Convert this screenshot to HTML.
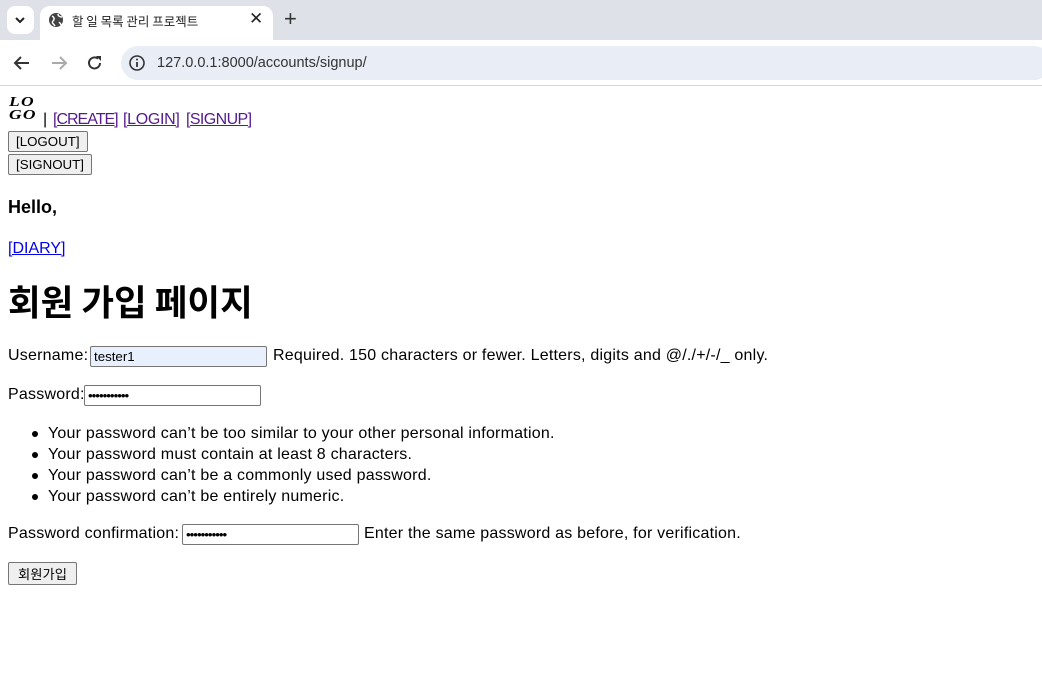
<!DOCTYPE html>
<html><head><meta charset="utf-8">
<style>
*{box-sizing:border-box}
html,body{margin:0;padding:0;width:1042px;height:683px;overflow:hidden;background:#fff;
font-family:"Liberation Sans","Noto Sans CJK KR",sans-serif;font-size:16px;color:#000}
.a{position:absolute;white-space:nowrap}
.t{letter-spacing:.22px}
.tabbar{position:absolute;left:0;top:0;width:1042px;height:40px;background:#dee1e8}
.tab{position:absolute;left:40px;top:6px;width:233px;height:34px;background:#fff;border-radius:10px 10px 0 0}
.tbar{position:absolute;left:0;top:40px;width:1042px;height:46px;background:#fff;border-bottom:1px solid #d6d6d6}
.addr{position:absolute;left:121px;top:46px;width:930px;height:34px;background:#e9edf6;border-radius:17px}
a{color:#551a8b}
.blue{color:#0000ee}
.btn{position:absolute;background:#efefef;border:1px solid #767676;border-radius:2px;font-size:13.3px;font-family:"Liberation Sans",sans-serif;padding:0 7px;height:21px;line-height:19px}
.inp{position:absolute;height:21px;border:1px solid #767676;border-radius:2px;background:#fff;font-size:13.3px;line-height:19px;padding-left:3px;font-family:"Liberation Sans",sans-serif}
ul{margin:0;padding:0;list-style:none}
li{position:absolute;left:48px;white-space:nowrap;list-style:none;letter-spacing:.22px}
li::before{content:"";position:absolute;left:-16px;top:6px;width:6px;height:6px;border-radius:50%;background:#000}
</style></head><body>
<div class="tabbar"></div>
<div style="position:absolute;left:7px;top:6px;width:27px;height:28px;background:#fff;border-radius:8px"></div>
<svg class="a" style="left:14px;top:15px" width="12" height="10"><path d="M2 3l4 4 4-4" stroke="#222" stroke-width="2" fill="none"/></svg>
<div class="tab"></div>
<svg class="a" style="left:48px;top:12px" width="16" height="16"><circle cx="8" cy="8" r="7" fill="#444"/><path d="M4 4c2 1 3 3 1 5s1 3 2 5M10 2c0 2 2 3 4 3M11 10c1 1 2 2 2 3" stroke="#fff" stroke-width="1.5" fill="none"/></svg>
<div class="a" style="left:72px;top:11px;font-size:12.5px;color:#222;font-family:'Noto Sans CJK KR',sans-serif">할 일 목록 관리 프로젝트</div>
<div class="a" style="left:249px;top:9px;font-size:17px;color:#222">✕</div>
<div class="a" style="left:284px;top:6px;font-size:22px;color:#333">+</div>
<div class="tbar"></div>
<div class="addr"></div>
<svg class="a" style="left:13px;top:55px" width="18" height="16"><path d="M16 8H3M8 2L2 8l6 6" stroke="#333" stroke-width="2" fill="none"/></svg>
<svg class="a" style="left:50px;top:55px" width="18" height="16"><path d="M2 8h13M10 2l6 6-6 6" stroke="#aaa" stroke-width="2" fill="none"/></svg>
<svg class="a" style="left:86px;top:54px" width="18" height="18"><path d="M14 9a5.5 5.5 0 1 1-2-4.3" stroke="#333" stroke-width="2" fill="none"/><path d="M10 2h5v5z" fill="#333"/></svg>
<svg class="a" style="left:129px;top:55px" width="16" height="16"><circle cx="8" cy="8" r="7" stroke="#333" stroke-width="1.6" fill="none"/><path d="M8 7v5" stroke="#333" stroke-width="1.8"/><circle cx="8" cy="4.5" r="1" fill="#333"/></svg>
<div class="a" style="left:157px;top:55px;font-size:14.5px;color:#333">127.0.0.1:8000/accounts/signup/</div>

<div class="a" style="left:9px;top:96px;font-family:'Liberation Serif',serif;font-weight:bold;font-style:italic;font-size:14px;line-height:13px;letter-spacing:1px;transform:scaleX(1.25);transform-origin:left">LO<br>GO</div>
<div class="a" style="left:43px;top:111px;font-size:16px">|</div>
<a class="a" style="left:53px;top:111px;letter-spacing:-1px" href="#c">[CREATE]</a>
<a class="a" style="left:123px;top:111px;letter-spacing:-.3px" href="#l">[LOGIN]</a>
<a class="a" style="left:186px;top:111px;letter-spacing:-.6px" href="#s">[SIGNUP]</a>
<div class="btn" style="left:8px;top:131px">[LOGOUT]</div>
<div class="btn" style="left:8px;top:154px">[SIGNOUT]</div>
<div class="a" style="left:8px;top:197px;font-weight:bold;font-size:18px">Hello,</div>
<div class="a" style="left:8px;top:240px"><a class="blue" href="#d">[DIARY]</a></div>
<div class="a" style="left:8px;top:279px;font-weight:bold;font-size:35.5px;font-family:'Noto Sans CJK KR',sans-serif;line-height:44px">회원 가입 페이지</div>

<div class="a t" style="left:8px;top:347px">Username:</div>
<div class="inp" style="left:90px;top:346px;width:177px;background:#e8f0fe">tester1</div>
<div class="a t" style="left:273px;top:347px">Required. 150 characters or fewer. Letters, digits and @/./+/-/_ only.</div>

<div class="a t" style="left:8px;top:386px">Password:</div>
<div class="inp" style="left:84px;top:385px;width:177px;letter-spacing:-1px">•••••••••••</div>

<ul>
<li style="top:425px">Your password can’t be too similar to your other personal information.</li>
<li style="top:446px">Your password must contain at least 8 characters.</li>
<li style="top:467px">Your password can’t be a commonly used password.</li>
<li style="top:488px">Your password can’t be entirely numeric.</li>
</ul>

<div class="a t" style="left:8px;top:525px">Password confirmation:</div>
<div class="inp" style="left:182px;top:524px;width:177px;letter-spacing:-1px">•••••••••••</div>
<div class="a t" style="left:364px;top:525px">Enter the same password as before, for verification.</div>

<div class="btn" style="left:8px;top:562px;height:23px;line-height:21px;padding:0 9px;font-family:'Noto Sans CJK KR',sans-serif">회원가입</div>
</body></html>
